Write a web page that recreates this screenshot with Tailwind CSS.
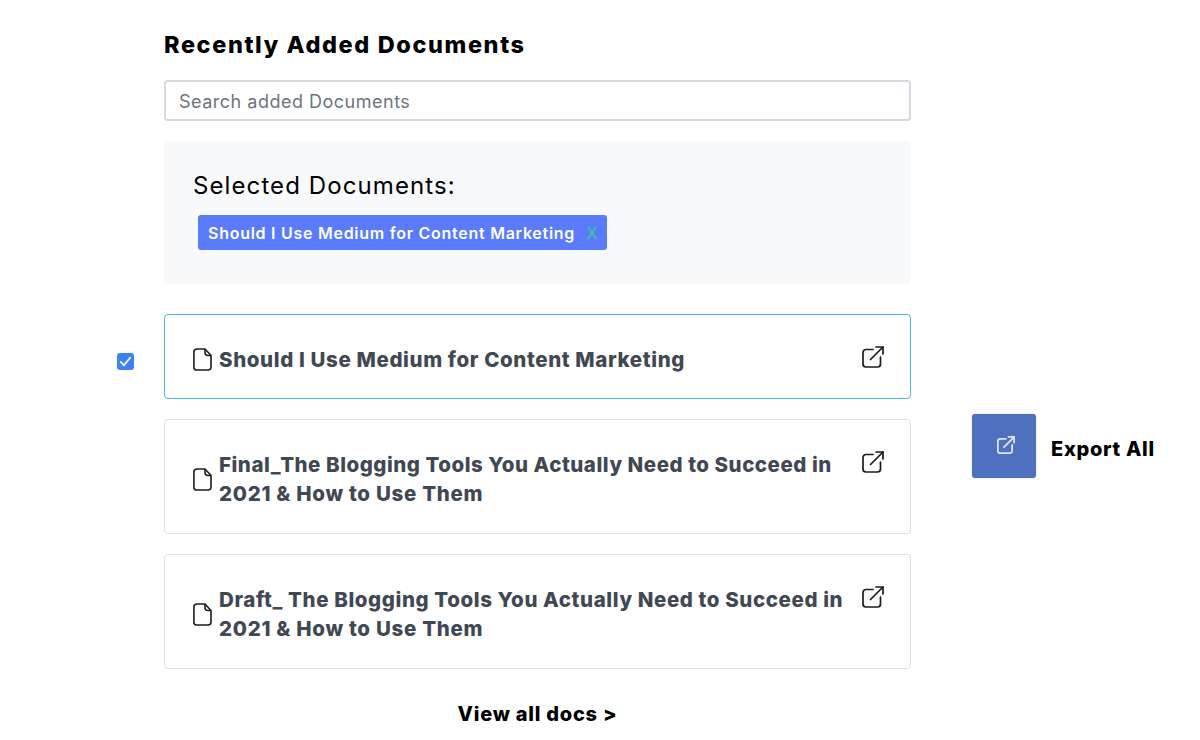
<!DOCTYPE html>
<html>
<head>
<meta charset="utf-8">
<script src="https://cdn.jsdelivr.net/npm/@tailwindcss/browser@4"></script>
</head>
<body class="bg-white font-['Inter',sans-serif]">
<div class="relative w-[1200px] h-[740px] overflow-hidden flex pl-[164px] pt-[29px]">
  <main class="w-[747px] shrink-0 flex flex-col">
    <h1 class="text-[23.5px] leading-[32px] font-extrabold text-black tracking-[1.6px]">Recently Added Documents</h1>
    <input class="mt-[19px] h-[41px] border-2 border-[#d5d9e0] rounded-[4px] px-[13px] pt-[2px] text-[18px] tracking-[0.5px] placeholder:text-[#6c757d] font-normal outline-none" placeholder="Search added Documents">
    <section class="mt-[20px] h-[143px] bg-[#f8f9fb] rounded-[4px] pl-[29px] pt-[29px]">
      <h2 class="text-[24px] leading-[32px] font-normal text-black tracking-[1.1px]">Selected Documents:</h2>
      <div class="mt-[13px] ml-[5px] inline-flex items-center h-[35px] w-[409px] bg-[#5a7bfb] rounded-[3px] pl-[10px] text-[16px] font-semibold text-white tracking-[0.73px] whitespace-nowrap">Should I Use Medium for Content Marketing<span class="ml-[11px] text-[#3ebf9f]">X</span></div>
    </section>

    <div class="relative mt-[30px] h-[85px] border border-[#4fb3e3] rounded-[4px] flex items-center pl-[28px] pr-[26px]">
      <span class="absolute -left-[48px] top-[38px] w-[17px] h-[17px] bg-[#3b82f6] rounded-[3px] flex items-center justify-center">
        <svg class="w-[15px] h-[15px]" viewBox="0 0 16 16" fill="none" stroke="white" stroke-width="2" stroke-linecap="round" stroke-linejoin="round"><path d="M3 8.5l3.3 3.5L13 4"/></svg>
      </span>
      <svg class="w-[19px] h-[23px] shrink-0 mt-[5px]" viewBox="0 0 19 23" fill="none" stroke="#1c1c1c" stroke-width="1.6" stroke-linejoin="round"><path d="M3.5 1h8.5l6 6.5V19a3 3 0 0 1-3 3H3.5a2.6 2.6 0 0 1-2.6-3V4a3 3 0 0 1 2.6-3z"/><path d="M12 1v3.5a3 3 0 0 0 3 3h3"/></svg>
      <span class="ml-[7px] flex-1 text-[20.5px] leading-[29px] font-extrabold text-[#3f4853] tracking-[0.62px] mt-[5px] whitespace-nowrap">Should I Use Medium for Content Marketing</span>
      <svg class="w-[22px] h-[22px] mt-0 shrink-0" viewBox="0 0 22 22" fill="none" stroke="#1c1c1c" stroke-width="1.7" stroke-linecap="round" stroke-linejoin="round"><path d="M11 3.5H4a3 3 0 0 0-3 3V18a3 3 0 0 0 3 3h11.5a3 3 0 0 0 3-3v-7"/><path d="M8.5 13.5L21 1"/><path d="M14 1h7v7"/></svg>
    </div>

    <div class="mt-[20px] h-[115px] border border-[#dcdfe4] rounded-[4px] flex items-center pl-[28px] pr-[26px]">
      <svg class="w-[19px] h-[23px] shrink-0 mt-[5px]" viewBox="0 0 19 23" fill="none" stroke="#1c1c1c" stroke-width="1.6" stroke-linejoin="round"><path d="M3.5 1h8.5l6 6.5V19a3 3 0 0 1-3 3H3.5a2.6 2.6 0 0 1-2.6-3V4a3 3 0 0 1 2.6-3z"/><path d="M12 1v3.5a3 3 0 0 0 3 3h3"/></svg>
      <span class="ml-[7px] flex-1 text-[20.5px] leading-[29px] font-extrabold text-[#3f4853] tracking-[0.53px] mt-[5px] whitespace-nowrap">Final_The Blogging Tools You Actually Need to Succeed in<br><span class="tracking-[0.7px]">2021 &amp; How to Use Them</span></span>
      <svg class="w-[22px] h-[22px] -mt-[29px] shrink-0" viewBox="0 0 22 22" fill="none" stroke="#1c1c1c" stroke-width="1.7" stroke-linecap="round" stroke-linejoin="round"><path d="M11 3.5H4a3 3 0 0 0-3 3V18a3 3 0 0 0 3 3h11.5a3 3 0 0 0 3-3v-7"/><path d="M8.5 13.5L21 1"/><path d="M14 1h7v7"/></svg>
    </div>

    <div class="mt-[20px] h-[115px] border border-[#dcdfe4] rounded-[4px] flex items-center pl-[28px] pr-[26px]">
      <svg class="w-[19px] h-[23px] shrink-0 mt-[5px]" viewBox="0 0 19 23" fill="none" stroke="#1c1c1c" stroke-width="1.6" stroke-linejoin="round"><path d="M3.5 1h8.5l6 6.5V19a3 3 0 0 1-3 3H3.5a2.6 2.6 0 0 1-2.6-3V4a3 3 0 0 1 2.6-3z"/><path d="M12 1v3.5a3 3 0 0 0 3 3h3"/></svg>
      <span class="ml-[7px] flex-1 text-[20.5px] leading-[29px] font-extrabold text-[#3f4853] tracking-[0.6px] mt-[5px] whitespace-nowrap">Draft_ The Blogging Tools You Actually Need to Succeed in<br><span class="tracking-[0.7px]">2021 &amp; How to Use Them</span></span>
      <svg class="w-[22px] h-[22px] -mt-[29px] shrink-0" viewBox="0 0 22 22" fill="none" stroke="#1c1c1c" stroke-width="1.7" stroke-linecap="round" stroke-linejoin="round"><path d="M11 3.5H4a3 3 0 0 0-3 3V18a3 3 0 0 0 3 3h11.5a3 3 0 0 0 3-3v-7"/><path d="M8.5 13.5L21 1"/><path d="M14 1h7v7"/></svg>
    </div>

    <a class="mt-[31px] text-center text-[20px] leading-[28px] font-extrabold text-black tracking-[0.75px]">View all docs &gt;</a>
  </main>

  <aside class="ml-[61px] mt-[385px] flex items-center h-[64px] self-start">
    <button class="w-[64px] h-[64px] bg-[#4f6fbf] rounded-[3px] flex items-center justify-center shadow-[0_0_2px_rgba(0,0,0,0.15)]">
      <svg class="w-[18px] h-[18px] -mt-[3px] ml-[3px]" viewBox="0 0 22 22" fill="none" stroke="#dfe6f5" stroke-width="2.2" stroke-linecap="round" stroke-linejoin="round"><path d="M11 3.5H4a3 3 0 0 0-3 3V18a3 3 0 0 0 3 3h11.5a3 3 0 0 0 3-3v-7"/><path d="M8.5 13.5L21 1"/><path d="M14 1h7v7"/></svg>
    </button>
    <span class="ml-[15px] mt-[6px] text-[20px] font-extrabold text-black tracking-[0.7px] whitespace-nowrap">Export All</span>
  </aside>
</div>
</body>
</html>
